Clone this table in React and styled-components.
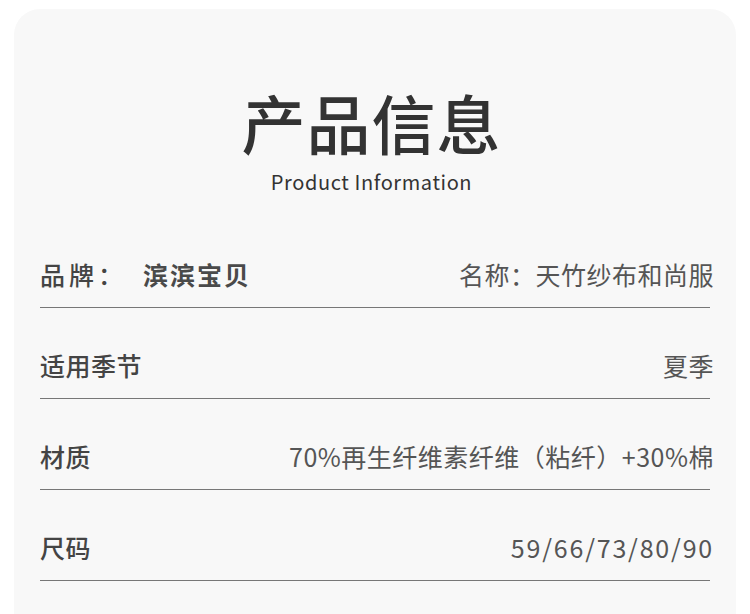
import styled, { createGlobalStyle } from 'styled-components';

const GlobalStyle = createGlobalStyle`
    body {
        margin: 0;
        background: #ffffff;
        font-family: "Noto Sans CJK SC", "Noto Sans", sans-serif;
    }
`;

const Page = styled.div`
    width: 750px;
    height: 614px;
    overflow: hidden;
    padding: 9px 14px 0;
    box-sizing: border-box;
`;

const Card = styled.div`
    background: #f8f8f8;
    border-radius: 26px 26px 0 0;
    height: 640px;
    padding: 76px 24px 0 26px;
    box-sizing: border-box;
`;

const Heading = styled.div`
    text-align: center;
    color: #333333;
    margin-right: 9px;
`;

const Title = styled.h1`
    margin: 0;
    font-size: 64px;
    line-height: 72px;
    font-weight: 500;
    letter-spacing: 1px;
`;

const Subtitle = styled.div`
    font-size: 20px;
    line-height: 24px;
    margin-top: 13px;
    font-weight: 400;
    letter-spacing: 0.6px;
`;

const List = styled.div`
    margin-top: 47px;
    display: flex;
    flex-direction: column;
    gap: 24px;
    margin-right: 2px;
`;

const Row = styled.div`
    display: flex;
    justify-content: space-between;
    align-items: center;
    height: 67px;
    border-bottom: 1px solid #777777;
    box-sizing: border-box;
`;

const Label = styled.div`
    font-size: 25px;
    font-weight: 500;
    color: #444444;
    letter-spacing: 0.5px;
    display: flex;
`;

const Key = styled.span`
    letter-spacing: 4px;
`;

const Brand = styled.span`
    margin-left: 16px;
    letter-spacing: 2px;
    font-weight: 700;
    color: #4a4a4a;
`;

const Value = styled.div`
    font-size: 25px;
    color: #555555;
    letter-spacing: ${p => p.$ls || 0.5}px;
    margin-right: -4px;
`;

const rows = [
    { label: '适用季节', value: '夏季' },
    { label: '材质', value: '70%再生纤维素纤维（粘纤）+30%棉' },
    { label: '尺码', value: '59/66/73/80/90', ls: 1.8 },
];

export default function App() {
    return (
        <Page>
            <GlobalStyle />
            <Card>
                <Heading>
                    <Title>产品信息</Title>
                    <Subtitle>Product Information</Subtitle>
                </Heading>
                <List>
                    <Row>
                        <Label>
                            <Key>品牌：</Key>
                            <Brand>滨滨宝贝</Brand>
                        </Label>
                        <Value>名称：天竹纱布和尚服</Value>
                    </Row>
                    {rows.map(r => (
                        <Row key={r.label}>
                            <Label>{r.label}</Label>
                            <Value $ls={r.ls}>{r.value}</Value>
                        </Row>
                    ))}
                </List>
            </Card>
        </Page>
    );
}
